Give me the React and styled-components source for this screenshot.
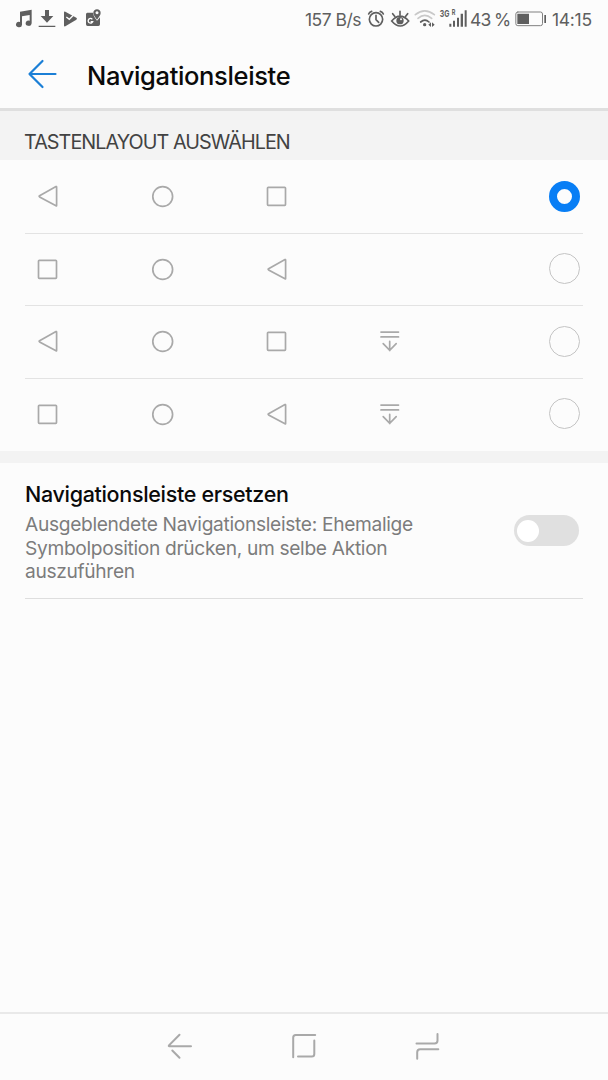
import React, { useState } from 'react'
import styled, { createGlobalStyle } from 'styled-components'

const layouts = [
  ['back', 'home', 'recent'],
  ['recent', 'home', 'back'],
  ['back', 'home', 'recent', 'panel'],
  ['recent', 'home', 'back', 'panel'],
]

function KeyIcon({ name }) {
  return (
    <KeySvg viewBox="0 0 24 24">
      {name === 'back' && <path d="M20.600 2.900v18.600q0 .6-.6.3L3.600 12.900q-.9-.6 0-1.200L20 2.600q.6-.3.6.3z" />}
      {name === 'home' && <circle cx="11.700" cy="12.500" r="9.900" />}
      {name === 'recent' && <rect x="2.500" y="3.300" width="18" height="18" rx="0.8" />}
      {name === 'panel' && <path d="M1 3.100h17.500M1 7.900h17.500M9.700 12.400v9M3.200 14.700l6.500 6.700 6.500-6.700" />}
    </KeySvg>
  )
}

function StatusBar() {
  return (
    <Status>
      <StatusSvg $w={23} viewBox="42 0 69 114">
        <path fillRule="evenodd" d="M60 35l35-6v41a9 8 0 1 1-6-8V45l-23 4v25a9 8 0 1 1-6-8z" />
      </StatusSvg>
      <StatusSvg $w={24} viewBox="111 0 72 114">
        <path d="M135 30h12v18h13l-19 20-19-20h13zM116 77h50v4h-50z" />
      </StatusSvg>
      <StatusSvg $w={22} viewBox="183 0 66 114">
        <path d="M192 37q0-4 4-2l33 18q4 3 0 6l-33 20q-4 1-4-2V37z" />
        <path className="cut thin" d="M199 51l9 7 15-15" />
      </StatusSvg>
      <StatusSvg $w={22} viewBox="249 0 66 114">
        <path d="M262 38h18q-2 8 11 24 5-4 9-10v21q0 5-5 5h-32q-5 0-5-5V43q0-5 4-5z" />
        <path fillRule="evenodd" d="M291 28c6 0 11 4 11 11 0 6-5 11-11 20-6-9-11-14-11-20 0-7 5-11 11-11zm0 6a4.500 4.500 0 1 0 .1 0z" />
        <path className="cut thin" d="M277 58a7 7 0 1 0 1 7h-6" />
      </StatusSvg>
      <Speed>157 B/s</Speed>
      <StatusSvg $w={22} viewBox="198 0 66 114">
        <circle className="line" cx="228" cy="58" r="20" />
        <path className="line" d="M228 46v13l8 8M206 42q2-6 9-8M241 34q7 2 9 8" />
      </StatusSvg>
      <StatusSvg $w={24} viewBox="264 0 72 114">
        <path className="line" d="M275 63q25-29 51 0-25 30-51 0zM300 45V34M284 49l-6-8M317 49l6-8" />
        <circle cx="300" cy="62" r="11" />
        <circle cx="303" cy="58" r="3" fill="#fcfcfc" />
      </StatusSvg>
      <StatusSvg $w={26} viewBox="336 0 78 114">
        <path className="faint" d="M346 44q28-23 57 0M354 55q20-18 41 0" />
        <path className="line" d="M362 66q13-11 25 0" />
        <circle cx="374" cy="74" r="5" />
        <path d="M393 67v14l-8-7zM396 67v14l8-7z" />
      </StatusSvg>
      <StatusSvg $w={31} viewBox="-6 0 93 114">
        <text x="-1" y="52" fontSize="28" textLength="29" lengthAdjust="spacingAndGlyphs">3G</text>
        <text x="35" y="46" fontSize="22" textLength="11" lengthAdjust="spacingAndGlyphs">R</text>
        <path d="M28 71h6v9h-6zM39 62h6v18h-6zM51 53h6v27h-6zM62 41h7v39h-7zM74 31h6v49h-6z" />
      </StatusSvg>
      <Percent>43 %</Percent>
      <StatusSvg $w={39} viewBox="219 0 117 114">
        <rect className="outline" x="227.500" y="36" width="80" height="41" rx="6" />
        <path d="M232 41h35v31h-35zM313 45h5v24h-5z" />
      </StatusSvg>
      <Clock>14:15</Clock>
    </Status>
  )
}

function App() {
  const [selected, setSelected] = useState(0)
  const [replace, setReplace] = useState(false)

  return (
    <Screen>
      <GlobalStyle />
      <StatusBar />
      <Header>
        <BackSvg viewBox="0 0 30 30">
          <path d="M28.500 15H2.500M15.500 2L2.500 15l13 13" />
        </BackSvg>
        <Title>Navigationsleiste</Title>
      </Header>
      <SectionLabel>TASTENLAYOUT AUSWÄHLEN</SectionLabel>
      <LayoutList>
        {layouts.map((keys, index) => (
          <LayoutRow key={index} onClick={() => setSelected(index)}>
            <Keys>
              {keys.map((name) => <KeyIcon key={name} name={name} />)}
            </Keys>
            <Radio $checked={selected === index} />
          </LayoutRow>
        ))}
      </LayoutList>
      <Separator />
      <Setting>
        <SettingText>
          <SettingTitle>Navigationsleiste ersetzen</SettingTitle>
          <SettingInfo>
            Ausgeblendete Navigationsleiste: Ehemalige<br />
            Symbolposition drücken, um selbe Aktion<br />
            auszuführen
          </SettingInfo>
        </SettingText>
        <Toggle $on={replace} onClick={() => setReplace(!replace)}>
          <Knob />
        </Toggle>
      </Setting>
      <NavBar>
        <NavSvg viewBox="0 0 28 28">
          <path d="M25 14.300H3.200M13.500 2.700L3 13.300q-.7 1 .5 1M6.300 18.500l7.200 7.200" />
        </NavSvg>
        <NavSvg viewBox="0 0 28 28">
          <path d="M3.200 25.300V5.500q0-2.500 2.500-2.500h19.500M24.300 8.500v13.500q0 2.500-2.500 2.500H8" />
        </NavSvg>
        <NavSvg viewBox="0 0 28 28">
          <path d="M2.500 11.500h18q3 0 3-3V2M24.300 17.200H6.200q-3 0-3 3v6.500" />
        </NavSvg>
      </NavBar>
    </Screen>
  )
}

export default App

const GlobalStyle = createGlobalStyle`
    body {
        margin: 0;
        background: #fcfcfc;
    }
    * {
        box-sizing: border-box;
    }
`
const Screen = styled.div`
    display: flex;
    flex-direction: column;
    width: 608px;
    height: 1080px;
    background: #fcfcfc;
    font-family: Inter, Roboto, sans-serif;
    overflow: hidden;
`
const Status = styled.div`
    display: flex;
    height: 38px;
    padding-left: 14px;
    color: #5f5f5f;
    font-size: 17.5px;
    line-height: 39px;
    white-space: nowrap;
`
const StatusSvg = styled.svg`
    flex: none;
    width: ${(props) => props.$w}px;
    height: 38px;
    fill: #5f5f5f;
    font-weight: 700;

    .line, .faint, .outline {
        fill: none;
        stroke: #5f5f5f;
        stroke-width: 5;
        stroke-linecap: round;
    }
    .faint {
        stroke: #c9c9c9;
    }
    .outline {
        stroke: #808080;
        stroke-width: 3;
    }
    .cut {
        fill: none;
        stroke: #fcfcfc;
        stroke-width: 6;
    }
    .thin {
        stroke-width: 4;
    }
`
const Speed = styled.span`
    width: 61px;
    margin-left: auto;
    letter-spacing: -0.5px;
`
const Percent = styled.span`
    width: 44px;
    padding-left: 1px;
    letter-spacing: -0.7px;
    word-spacing: -1px;
`
const Clock = styled.span`
    width: 56px;
    letter-spacing: -0.3px;
`
const Header = styled.header`
    display: flex;
    align-items: center;
    height: 73px;
    padding: 2px 0 0 27px;
    border-bottom: 3px solid #dfdfdf;
`
const BackSvg = styled.svg`
    flex: none;
    width: 30px;
    height: 30px;
    margin-right: 30px;
    fill: none;
    stroke: #1b7fd6;
    stroke-width: 2.2;
    stroke-linecap: round;
    stroke-linejoin: round;
`
const Title = styled.h1`
    margin: 3px 0 0;
    font-size: 25.5px;
    font-weight: 500;
    letter-spacing: -0.35px;
    color: #0a0a0a;
`
const SectionLabel = styled.div`
    height: 49px;
    padding: 12px 24px 0;
    background: #f3f3f3;
    color: #424242;
    font-size: 19.8px;
    line-height: 39px;
    letter-spacing: -0.95px;
    white-space: nowrap;
`
const LayoutList = styled.div`
    height: 291px;
    padding: 0 25px;
`
const LayoutRow = styled.div`
    display: flex;
    align-items: center;
    justify-content: space-between;
    height: 72.5px;
    padding: 0 3px 0 11px;
    cursor: pointer;

    & + & {
        padding-bottom: 1px;
        border-top: 1px solid #e3e3e3;
    }
`
const Keys = styled.div`
    display: grid;
    grid-template-columns: repeat(4, 114.5px);
`
const KeySvg = styled.svg`
    width: 24px;
    height: 24px;
    fill: none;
    stroke: #a9a9a9;
    stroke-width: 1.7;
    stroke-linecap: round;
`
const Radio = styled.span`
    width: 31px;
    height: 31px;
    border-radius: 50%;
    border: ${(props) => (props.$checked ? '8px solid #087ef5' : '1.5px solid #c4c4c4')};
`
const Separator = styled.div`
    height: 12px;
    background: #f3f3f3;
`
const Setting = styled.div`
    display: flex;
    align-items: center;
    justify-content: space-between;
    height: 136px;
    margin: 0 25px;
    padding-right: 4px;
    border-bottom: 1px solid #dedede;
`
const SettingText = styled.div`
    padding-top: 2px;
    white-space: nowrap;
`
const SettingTitle = styled.div`
    margin-bottom: 4px;
    color: #0a0a0a;
    font-size: 21.5px;
    font-weight: 500;
    line-height: 30px;
    letter-spacing: -0.32px;
`
const SettingInfo = styled.div`
    color: #7c7c7c;
    font-size: 19.2px;
    line-height: 23.7px;
    letter-spacing: -0.33px;
`
const Toggle = styled.div`
    display: flex;
    align-items: center;
    justify-content: ${(props) => (props.$on ? 'flex-end' : 'flex-start')};
    width: 65px;
    height: 31px;
    padding: 0 3px;
    border-radius: 16px;
    background: ${(props) => (props.$on ? '#087ef5' : '#e0e0e0')};
    cursor: pointer;
`
const Knob = styled.span`
    width: 22px;
    height: 22px;
    border-radius: 50%;
    background: #fff;
`
const NavBar = styled.nav`
    display: flex;
    align-items: center;
    justify-content: center;
    gap: 96px;
    height: 68px;
    padding-bottom: 2px;
    margin-top: auto;
    border-top: 2px solid #e9e9e9;
`
const NavSvg = styled.svg`
    width: 28px;
    height: 28px;
    fill: none;
    stroke: #a9a9a9;
    stroke-width: 2;
    stroke-linecap: round;
`
